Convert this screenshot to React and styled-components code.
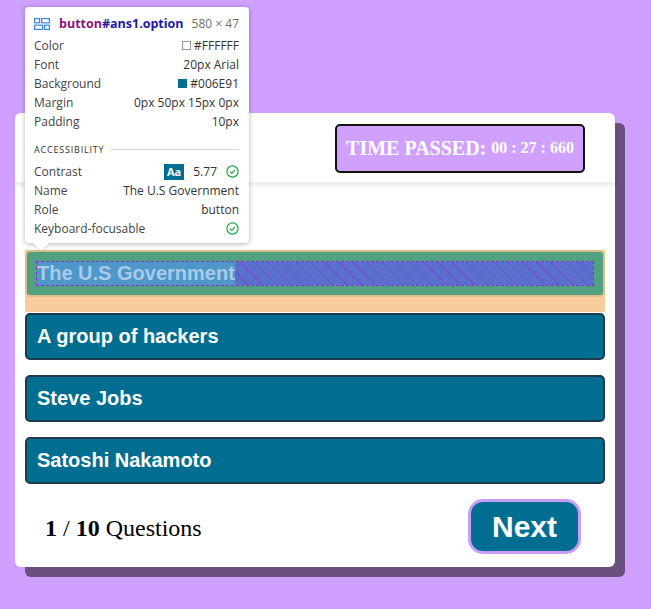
import React from 'react';
import styled, { createGlobalStyle } from 'styled-components';

const GlobalStyle = createGlobalStyle`
  html, body {
    margin: 0;
    padding: 0;
    background: #cfa0ff;
  }
  body {
    min-height: 100vh;
    font-family: "Liberation Serif", "Times New Roman", serif;
  }
`;

const Page = styled.div`
  position: relative;
  width: 651px;
  height: 609px;
  padding: 113px 0 0 15px;
  box-sizing: border-box;
`;

const Card = styled.div`
  width: 600px;
  background: #ffffff;
  border-radius: 6px;
  box-shadow: 10px 10px 0 #69507f;
`;

const Header = styled.header`
  height: 70px;
  display: flex;
  justify-content: flex-end;
  align-items: center;
  padding: 0 30px 0 0;
  box-shadow: 0 3px 4px rgba(0, 0, 0, 0.07);
  border-bottom: 1px solid #eeeeee;
  box-sizing: border-box;
`;

const Timer = styled.div`
  width: 250px;
  height: 49px;
  box-sizing: border-box;
  margin-top: 1px;
  background: #d0a0ff;
  border: 2px solid #111111;
  border-radius: 5px;
  display: flex;
  align-items: center;
  justify-content: center;
  gap: 5px;
  color: #ffffff;
  font-family: "Liberation Serif", "Times New Roman", serif;
  font-weight: bold;
`;

const TimerLabel = styled.span`
  font-size: 20px;
`;

const TimerValue = styled.span`
  font-size: 16px;
`;

const Body = styled.div`
  padding: 67px 10px 0 10px;
`;

const Option = styled.button`
  display: block;
  width: 580px;
  height: 47px;
  margin: 0 0 15px 0;
  padding: 10px;
  box-sizing: border-box;
  background: #006e91;
  border: 2px solid #1c3b4c;
  border-radius: 5px;
  color: #ffffff;
  font-family: "Liberation Sans", Arial, sans-serif;
  font-size: 20px;
  font-weight: bold;
  text-align: left;
  line-height: 23px;
  cursor: pointer;
`;

/* the orange band is the devtools margin overlay */
const InspectedWrap = styled.div`
  width: 580px;
  background: #f8cc9c;
  padding-bottom: 15px;
  margin-bottom: 1px;
`;

const InspectedOption = styled(Option)`
  margin: 0;
  background: #52a082;
  border: 2px solid #dcc083;
  padding: 10px;
`;

const ContentBox = styled.div`
  height: 23px;
  box-sizing: border-box;
  outline: 1px dashed #8a2be2;
  background-color: #5a70cc;
  background-image: repeating-linear-gradient(
    45deg,
    transparent 0 9px,
    rgba(138, 43, 226, 0.45) 9px 10px
  );
  display: flex;
`;

const HighlightedText = styled.span`
  background: #4e97c8;
  color: #a9cbeb;
  height: 23px;
  line-height: 23px;
`;

const Footer = styled.footer`
  display: flex;
  justify-content: space-between;
  align-items: center;
  padding: 0 34px 13px 30px;
`;

const Count = styled.div`
  font-family: "Liberation Serif", "Times New Roman", serif;
  font-size: 24px;
  color: #000000;
  padding-top: 4px;
`;

const NextButton = styled.button`
  width: 113px;
  height: 55px;
  box-sizing: border-box;
  background: #006e91;
  border: 3px solid #c89cf8;
  border-radius: 15px;
  color: #ffffff;
  font-family: "Liberation Sans", Arial, sans-serif;
  font-size: 30px;
  font-weight: bold;
  cursor: pointer;
`;

/* devtools inspect tooltip */
const Tooltip = styled.div`
  position: absolute;
  left: 25px;
  top: 7px;
  width: 224px;
  box-sizing: border-box;
  padding: 8px 10px 5px 9px;
  background: #ffffff;
  border-radius: 4px;
  box-shadow: 0 1px 5px rgba(0, 0, 0, 0.3);
  font-family: "Open Sans", "Noto Sans", sans-serif;
  font-size: 12px;
  color: #303030;

  &::after {
    content: '';
    position: absolute;
    left: 8px;
    bottom: -8px;
    border-left: 8px solid transparent;
    border-right: 8px solid transparent;
    border-top: 8px solid #ffffff;
    filter: drop-shadow(0 2px 1px rgba(0, 0, 0, 0.12));
  }
`;

const TitleRow = styled.div`
  display: flex;
  align-items: center;
  height: 17px;
  margin-bottom: 4px;
`;

const Tag = styled.span`
  font-weight: bold;
  font-size: 12.5px;
  margin-left: 9px;
  color: #881280;
`;

const Selector = styled.span`
  color: #1a1aa6;
`;

const Size = styled.span`
  margin-left: auto;
  color: #707070;
`;

const Row = styled.div`
  display: flex;
  justify-content: space-between;
  align-items: center;
  height: 19px;
`;

const Label = styled.span`
  color: #444444;
`;

const Value = styled.span`
  display: flex;
  align-items: center;
  gap: 3px;
  color: #333333;
`;

const Swatch = styled.span`
  display: inline-block;
  width: 9px;
  height: 9px;
  box-sizing: border-box;
  background: ${(p) => p.$color};
  border: 1px solid ${(p) => (p.$color === '#ffffff' ? '#999999' : p.$color)};
`;

const Section = styled.div`
  display: flex;
  align-items: center;
  gap: 6px;
  margin: 12px 0 6px;
  font-size: 9px;
  letter-spacing: 0.8px;
  color: #333333;

  &::after {
    content: '';
    flex: 1;
    height: 1px;
    background: #d8d8d8;
  }
`;

const AaBadge = styled.span`
  background: #006e91;
  color: #ffffff;
  font-weight: bold;
  font-size: 11px;
  padding: 0 3px;
  line-height: 16px;
  margin-right: 6px;
`;

const Check = () => (
  <svg width="13" height="13" viewBox="0 0 13 13" style={{ marginLeft: 6 }}>
    <circle cx="6.5" cy="6.5" r="5.6" fill="none" stroke="#1ea446" strokeWidth="1.2" />
    <path d="M4 6.7 L5.8 8.5 L9.1 4.9" fill="none" stroke="#1ea446" strokeWidth="1.2" />
  </svg>
);

const ElementIcon = () => (
  <svg width="16" height="12" viewBox="0 0 16 12">
    <g fill="none" stroke="#3b82e8" strokeWidth="1.2">
      <rect x="0.6" y="0.6" width="5" height="4.2" />
      <rect x="7.6" y="0.6" width="7.8" height="4.2" />
      <rect x="0.6" y="7.2" width="8" height="4.2" />
      <rect x="10.6" y="7.2" width="4.8" height="4.2" />
    </g>
  </svg>
);

const answers = ['A group of hackers', 'Steve Jobs', 'Satoshi Nakamoto'];

export default function App() {
  return (
    <>
      <GlobalStyle />
      <Page>
        <Card>
          <Header>
            <Timer>
              <TimerLabel>TIME PASSED:</TimerLabel>
              <TimerValue>00 : 27 : 660</TimerValue>
            </Timer>
          </Header>
          <Body>
            <InspectedWrap>
              <InspectedOption id="ans1">
                <ContentBox>
                  <HighlightedText>The U.S Government</HighlightedText>
                </ContentBox>
              </InspectedOption>
            </InspectedWrap>
            {answers.map((a) => (
              <Option key={a}>{a}</Option>
            ))}
          </Body>
          <Footer>
            <Count>
              <b>1</b> / <b>10</b> Questions
            </Count>
            <NextButton>Next</NextButton>
          </Footer>
        </Card>

        <Tooltip>
          <TitleRow>
            <ElementIcon />
            <Tag>
              button<Selector>#ans1.option</Selector>
            </Tag>
            <Size>580 × 47</Size>
          </TitleRow>
          <Row>
            <Label>Color</Label>
            <Value>
              <Swatch $color="#ffffff" />#FFFFFF
            </Value>
          </Row>
          <Row>
            <Label>Font</Label>
            <Value>20px Arial</Value>
          </Row>
          <Row>
            <Label>Background</Label>
            <Value>
              <Swatch $color="#006e91" />#006E91
            </Value>
          </Row>
          <Row>
            <Label>Margin</Label>
            <Value>0px 50px 15px 0px</Value>
          </Row>
          <Row>
            <Label>Padding</Label>
            <Value>10px</Value>
          </Row>
          <Section>ACCESSIBILITY</Section>
          <Row>
            <Label>Contrast</Label>
            <Value>
              <AaBadge>Aa</AaBadge>5.77
              <Check />
            </Value>
          </Row>
          <Row>
            <Label>Name</Label>
            <Value>The U.S Government</Value>
          </Row>
          <Row>
            <Label>Role</Label>
            <Value>button</Value>
          </Row>
          <Row>
            <Label>Keyboard-focusable</Label>
            <Value>
              <Check />
            </Value>
          </Row>
        </Tooltip>
      </Page>
    </>
  );
}
